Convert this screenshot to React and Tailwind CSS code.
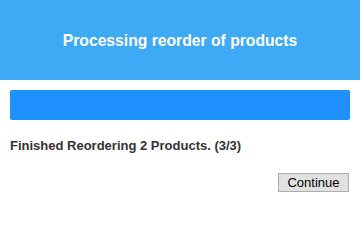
export default function App() {
  return (
    <div className="w-[360px] h-[205px] bg-white font-['Liberation_Sans',Arial,sans-serif]">
      <div className="h-[80px] bg-[#3ea9f5] flex items-center justify-center">
        <h1 className="text-white font-bold text-[15.7px] pt-px">Processing reorder of products</h1>
      </div>
      <div className="px-[10px] pt-[10px]">
        <div className="h-[30px] bg-[#1e90ff] rounded-[2px]" />
        <p className="mt-[18px] text-[13px] leading-[15px] font-bold text-[#333]">Finished Reordering 2 Products. (3/3)</p>
        <div className="flex justify-end mt-[20px] pr-px">
          <button className="w-[71px] h-[19px] bg-[#e1e1e1] border border-[#adadad] text-[13px] text-black leading-none">Continue</button>
        </div>
      </div>
    </div>
  );
}
